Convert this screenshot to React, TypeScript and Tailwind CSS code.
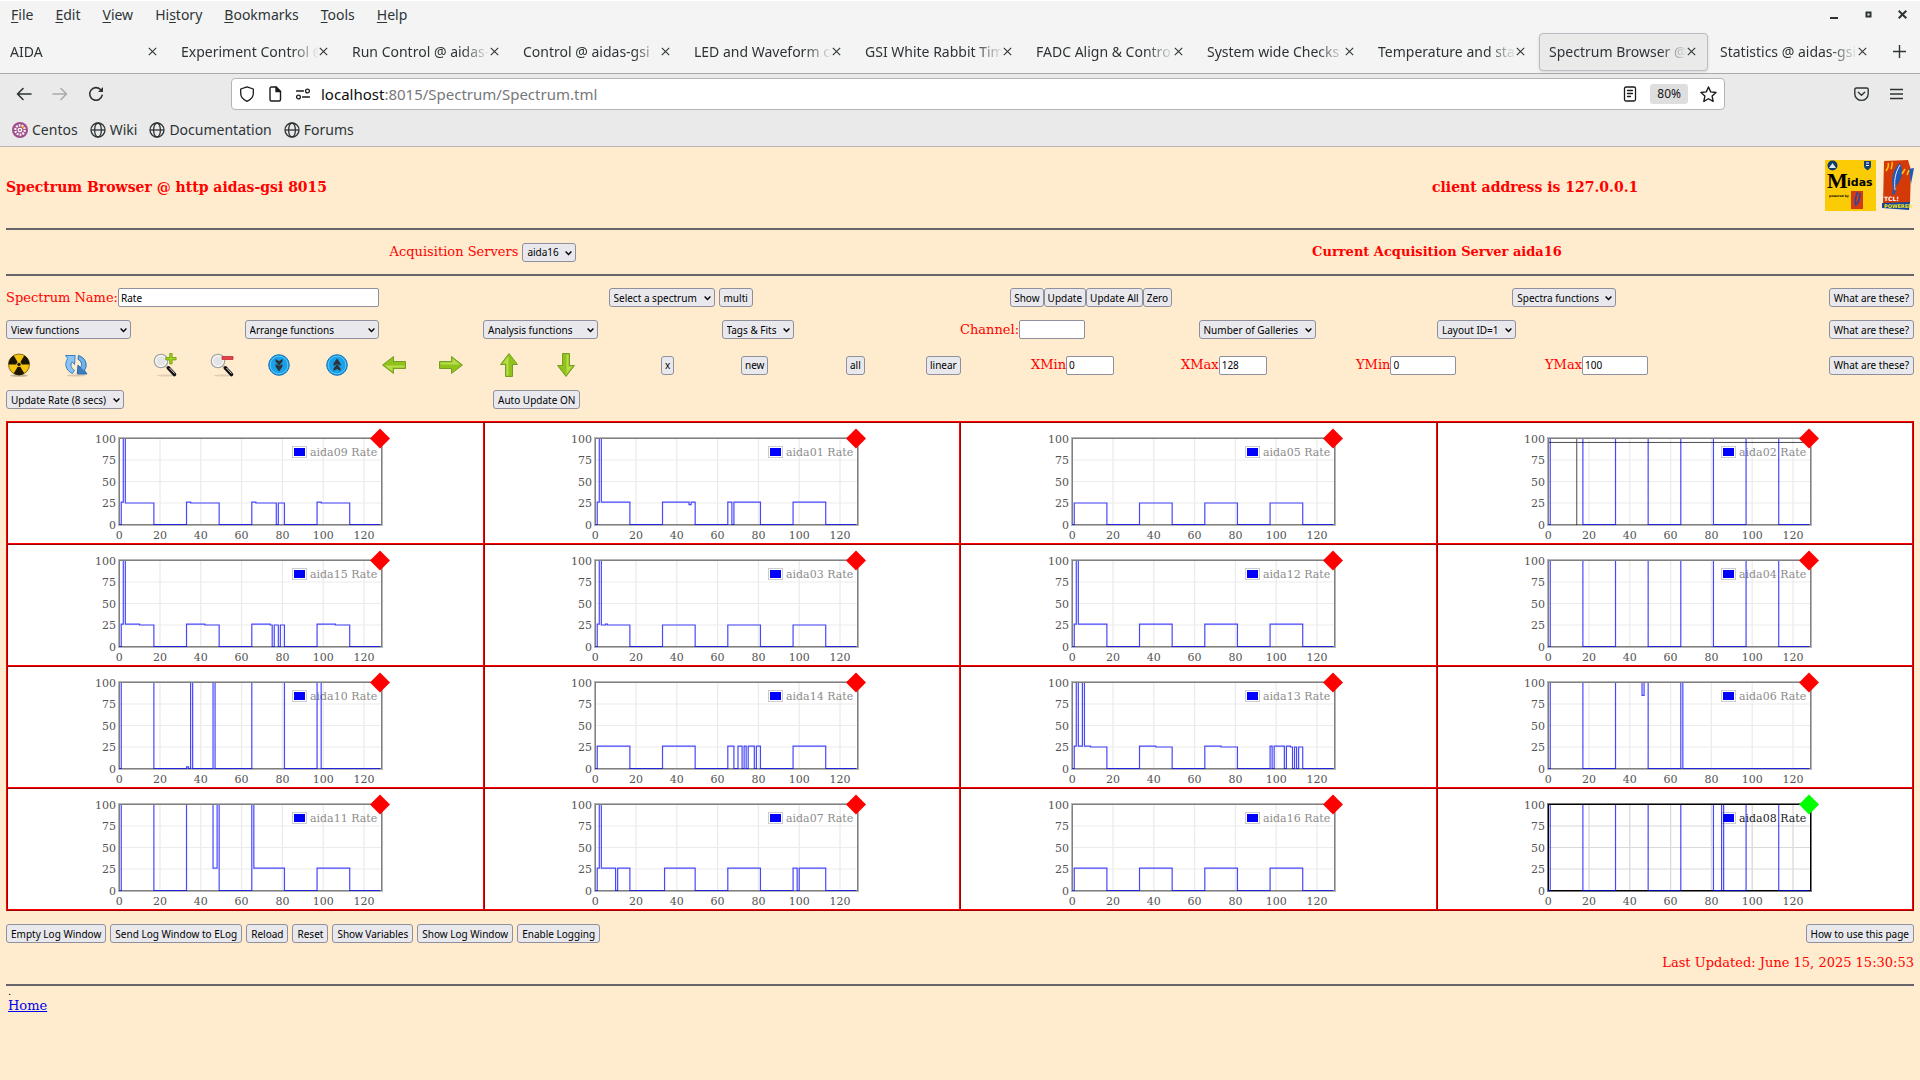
import { Fragment, useState } from 'react'
import type { ReactNode } from 'react'

type Step = [number, number]

interface Spectrum {
  name: string
  steps: Step[]
  active?: boolean
  cursor?: { x: number; y: number }
}

// anything above the axis maximum is clipped by the plot area
const OVER = 200

const MENUS = ['File', 'Edit', 'View', 'History', 'Bookmarks', 'Tools', 'Help']
const MENU_KEYS = [0, 0, 0, 2, 0, 0, 0]

const TABS = [
  'AIDA',
  'Experiment Control @',
  'Run Control @ aidas-',
  'Control @ aidas-gsi',
  'LED and Waveform ca',
  'GSI White Rabbit Tim',
  'FADC Align & Contro',
  'System wide Checks',
  'Temperature and stat',
  'Spectrum Browser @',
  'Statistics @ aidas-gsi',
]
const ACTIVE_TAB = 9

// four on/off cycles of 16 channels each
const cycles = (v: number): Step[] => [
  [0, 0], [1, v], [17, 0], [33, v], [49, 0], [65, v], [81, 0], [97, v], [113, 0],
]

const SPECTRA: Spectrum[] = [
  {
    name: 'aida09',
    steps: [[0, 0], [1, 26], [2, OVER], [3, 25], [17, 0], [33, 26], [35, 25], [49, 0], [65, 26], [67, 25], [77, 0], [78, 25], [81, 0], [97, 26], [99, 25], [113, 0]],
  },
  {
    name: 'aida01',
    steps: [[0, 0], [1, 26], [2, OVER], [3, 26], [17, 0], [33, 26], [46, 23], [47, 26], [49, 0], [65, 26], [67, 0], [68, 26], [81, 0], [97, 26], [113, 0]],
  },
  { name: 'aida05', steps: cycles(25) },
  { name: 'aida02', steps: cycles(OVER), cursor: { x: 14, y: 96 } },
  {
    name: 'aida15',
    steps: [[0, 0], [1, 26], [2, OVER], [3, 26], [10, 25], [17, 0], [33, 26], [42, 25], [49, 0], [65, 26], [74, 25], [75, 0], [76, 25], [78, 0], [79, 25], [81, 0], [97, 26], [106, 25], [113, 0]],
  },
  {
    name: 'aida03',
    steps: [[0, 0], [1, 26], [2, OVER], [3, 25], [5, 26], [6, 25], [17, 0], [33, 25], [49, 0], [65, 25], [81, 0], [97, 25], [113, 0]],
  },
  {
    name: 'aida12',
    steps: [[0, 0], [1, 26], [2, OVER], [3, 26], [17, 0], [33, 26], [49, 0], [65, 26], [81, 0], [97, 26], [113, 0]],
  },
  { name: 'aida04', steps: cycles(OVER) },
  {
    name: 'aida10',
    steps: [[0, 0], [1, OVER], [17, 0], [33, 2], [34, 0], [35, OVER], [36, 0], [46, OVER], [47, 0], [65, OVER], [81, 0], [97, OVER], [99, 0]],
  },
  {
    name: 'aida14',
    steps: [[0, 0], [1, 26], [17, 0], [33, 26], [49, 0], [65, 26], [68, 0], [70, 26], [72, 0], [73, 26], [74, 0], [75, 26], [78, 0], [79, 26], [81, 0], [97, 26], [113, 0]],
  },
  {
    name: 'aida13',
    steps: [[0, 0], [1, 26], [2, OVER], [3, 26], [5, OVER], [6, 26], [9, 25], [17, 0], [33, 26], [41, 25], [49, 0], [65, 26], [73, 25], [81, 0], [97, 26], [98, 0], [99, 26], [104, 0], [105, 26], [107, 25], [108, 0], [109, 25], [110, 0], [111, 25], [113, 0]],
  },
  {
    name: 'aida06',
    steps: [[0, 0], [1, OVER], [17, 0], [33, OVER], [46, 85], [47, OVER], [49, 0], [65, OVER], [66, 0]],
  },
  {
    name: 'aida11',
    steps: [[0, 0], [1, OVER], [17, 0], [33, OVER], [46, 26], [48, OVER], [49, 0], [65, OVER], [66, 26], [81, 0], [97, 26], [113, 0]],
  },
  {
    name: 'aida07',
    steps: [[0, 0], [1, 26], [2, OVER], [3, 26], [10, 0], [11, 26], [17, 0], [34, 26], [49, 0], [65, 26], [81, 0], [97, 26], [99, 0], [100, 26], [113, 0]],
  },
  { name: 'aida16', steps: cycles(26) },
  {
    name: 'aida08',
    active: true,
    steps: [[0, 0], [1, OVER], [17, 0], [33, OVER], [49, 0], [65, OVER], [81, 0], [85, OVER], [86, 0], [97, OVER], [113, 0]],
  },
]

/* ---------- browser chrome ---------- */

function CloseIcon() {
  return (
    <svg width="9" height="9" viewBox="0 0 9 9" fill="none" stroke="#2e3436" strokeWidth="1.1">
      <path d="M.8.8l7.400 7.400M8.200.8L.8 8.200" />
    </svg>
  )
}

function GlobeIcon() {
  return (
    <svg width="16" height="16" viewBox="0 0 16 16" fill="none" stroke="#2e3436" strokeWidth="1.3">
      <circle cx="8" cy="8" r="7" />
      <ellipse cx="8" cy="8" rx="3.400" ry="7" />
      <path d="M1 8h14" />
    </svg>
  )
}

function CentosIcon() {
  return (
    <svg width="16" height="16" viewBox="0 0 16 16">
      <circle cx="8" cy="8" r="8" fill="#a14f8c" />
      <circle cx="8" cy="8" r="4.700" fill="none" stroke="#fff" strokeWidth="2.200" strokeDasharray="1.800 1.100" />
      <circle cx="8" cy="8" r="1.700" fill="none" stroke="#fff" strokeWidth="1.300" />
      <path d="M9 4.500l3-.5.5 3-2-1z" fill="#efa724" />
    </svg>
  )
}

function BrowserChrome() {
  return (
    <header className="font-['Noto_Sans',sans-serif] text-[14px] text-[#2e3436]">
      <div className="flex h-[30px] items-center justify-between border-t border-white bg-[#f4f4f4] pr-[13px] pb-[2px] pl-[11px]">
        <nav className="flex gap-[22px]">
          {MENUS.map((m, i) => (
            <button key={m} type="button">
              {m.slice(0, MENU_KEYS[i])}
              <span className="underline underline-offset-2">{m[MENU_KEYS[i]]}</span>
              {m.slice(MENU_KEYS[i] + 1)}
            </button>
          ))}
        </nav>
        <div className="flex items-center gap-[25px]">
          <button type="button" aria-label="Minimize">
            <svg width="9" height="9" viewBox="0 0 9 9"><path d="M0 7h8v2H0z" fill="#2e3436" /></svg>
          </button>
          <button type="button" aria-label="Restore">
            <svg width="9" height="9" viewBox="0 0 9 9"><path d="M2.500 2.500h4v4h-4z" fill="none" stroke="#2e3436" strokeWidth="2" /></svg>
          </button>
          <button type="button" aria-label="Close">
            <svg width="9" height="9" viewBox="0 0 9 9"><path d="M.7.700l7.600 7.600M8.300.700L.7 8.300" stroke="#2e3436" strokeWidth="2" /></svg>
          </button>
        </div>
      </div>

      <div className="flex h-11 items-center border-b border-[#a9a9ab] bg-[#f4f4f4] pr-[14px]">
        {TABS.map((t, i) => (
          <div
            key={t}
            className={`mr-0.5 flex h-[38px] min-w-0 flex-1 items-center justify-between rounded-[4px] border pr-[11px] pl-[9px] leading-6 ${
              i === ACTIVE_TAB ? 'border-[#bcbcc4] bg-[#eaeaea] shadow-sm' : 'border-transparent'
            }`}
          >
            <span className="min-w-0 flex-1 overflow-hidden mask-r-from-80% whitespace-nowrap">{t}</span>
            <button type="button" aria-label={`Close ${t}`}><CloseIcon /></button>
          </div>
        ))}
        <button type="button" aria-label="New tab" className="ml-[12px]">
          <svg width="13" height="13" viewBox="0 0 13 13" stroke="#2e3436" strokeWidth="1.4"><path d="M6.500 0v13M0 6.500h13" /></svg>
        </button>
      </div>

      <div className="flex h-10 items-center bg-[#eaeaea] pr-[17px] pl-4">
        <div className="flex w-[215px] shrink-0 gap-5">
          <button type="button" aria-label="Back">
            <svg width="16" height="16" viewBox="0 0 16 16" fill="none" stroke="#2e3436" strokeWidth="1.600" strokeLinecap="round" strokeLinejoin="round"><path d="M15 8H1.500M7 2.500L1.500 8 7 13.500" /></svg>
          </button>
          <button type="button" aria-label="Forward" disabled>
            <svg width="16" height="16" viewBox="0 0 16 16" fill="none" stroke="#a9abac" strokeWidth="1.600" strokeLinecap="round" strokeLinejoin="round"><path d="M1 8h13.500M9 2.500L14.500 8 9 13.500" /></svg>
          </button>
          <button type="button" aria-label="Reload">
            <svg width="16" height="16" viewBox="0 0 16 16" fill="none" stroke="#2e3436" strokeWidth="1.600" strokeLinecap="round"><path d="M14.200 9.200a6.300 6.300 0 1 1-1.700-5.700l1.300 1.300" /><path d="M15 1v5h-5z" fill="#2e3436" stroke="none" /></svg>
          </button>
        </div>
        <div className="mr-[129px] flex h-8 min-w-0 flex-1 items-center rounded-[4px] border border-[#b4b4b6] bg-white px-[7px]">
          <svg width="16" height="16" viewBox="0 0 16 16" fill="none" stroke="#1b1b1f" strokeWidth="1.300" strokeLinejoin="round"><path d="M8 .8L14.300 3v4.500c0 3.500-3 6.300-6.300 7.800C4.700 13.800 1.700 11 1.700 7.500V3z" /></svg>
          <svg width="14" height="16" viewBox="0 0 14 16" className="ml-[13px]" fill="none" stroke="#1b1b1f" strokeWidth="1.400" strokeLinejoin="round"><path d="M2 2.500C2 1.700 2.600 1 3.500 1H8l4.500 4.500V13.500c0 .9-.6 1.500-1.500 1.500H3.500c-.9 0-1.500-.6-1.500-1.500z" /><path d="M8 1v4.500h4.500z" fill="#1b1b1f" /></svg>
          <svg width="16" height="16" viewBox="0 0 16 16" className="ml-[13px]" fill="none" stroke="#1b1b1f" strokeWidth="1.300" strokeLinecap="round"><path d="M1.500 5h7M7.500 11h7" /><circle cx="12.500" cy="5" r="1.900" /><circle cx="3.500" cy="11" r="1.900" /></svg>
          <div className="ml-[10px] flex-1 text-[15px] text-[#77777b]">
            <span className="text-[#0c0c0d]">localhost</span>:8015/Spectrum/Spectrum.tml
          </div>
          <button type="button" aria-label="Reader view">
            <svg width="14" height="16" viewBox="0 0 14 16" fill="none" stroke="#1b1b1f" strokeWidth="1.300" strokeLinecap="round"><rect x="1.500" y="1" width="11" height="14" rx="1.500" /><path d="M4.500 4.500h5M4.500 7.500h5M4.500 10.500h3" /></svg>
          </button>
          <button type="button" className="ml-[13px] h-5 rounded-[3px] bg-[#dedede] px-[7px] text-[12px] text-[#15141a]">80%</button>
          <button type="button" aria-label="Bookmark" className="ml-3">
            <svg width="17" height="17" viewBox="0 0 16 16" fill="none" stroke="#1b1b1f" strokeWidth="1.300" strokeLinejoin="round"><path d="M8 .9l2.100 4.600 5 .6-3.700 3.400 1 5L8 12l-4.400 2.500 1-5L.9 6.100l5-.6z" /></svg>
          </button>
        </div>
        <div className="flex items-center gap-[21px]">
          <button type="button" aria-label="Save to Pocket">
            <svg width="15" height="16" viewBox="0 0 15 16" fill="none" stroke="#2e3436" strokeWidth="1.400" strokeLinecap="round" strokeLinejoin="round"><path d="M2.200 2h10.600c.8 0 1.400.6 1.400 1.400V7.700a6.700 6.700 0 0 1-13.400 0V3.400C.8 2.600 1.400 2 2.200 2z" /><path d="M4.300 6.300l3.200 3 3.200-3" /></svg>
          </button>
          <button type="button" aria-label="Menu">
            <svg width="13" height="12" viewBox="0 0 13 12" stroke="#2e3436" strokeWidth="1.400"><path d="M0 1.500h13M0 6h13M0 10.500h13" /></svg>
          </button>
        </div>
      </div>

      <div className="flex h-[33px] items-center gap-3 border-b border-[#b4b4b6] bg-[#eaeaea] pl-3">
        <a href="#centos" className="flex items-center gap-1"><CentosIcon />Centos</a>
        {['Wiki', 'Documentation', 'Forums'].map(b => (
          <a key={b} href={`#${b.toLowerCase()}`} className="flex items-center gap-1"><GlobeIcon />{b}</a>
        ))}
      </div>
    </header>
  )
}

/* ---------- form controls ---------- */

function Btn({ children, tight = false }: { children: ReactNode; tight?: boolean }) {
  return (
    <button
      type="button"
      className={`h-[19px] shrink-0 rounded-[3px] border border-[#8f8f9d] bg-[#e9e9ed] font-['Noto_Sans',sans-serif] text-[10px] leading-4 whitespace-nowrap text-black ${tight ? 'px-[3px]' : 'px-1'}`}
    >
      {children}
    </button>
  )
}

function Picker({ label, className = '' }: { label: string; className?: string }) {
  return (
    <span className={`relative inline-flex ${className}`}>
      <select
        aria-label={label}
        className="h-[19px] w-full appearance-none rounded-[3px] border border-[#8f8f9d] bg-[#e9e9ed] pr-4 pl-1 font-['Noto_Sans',sans-serif] text-[10px] leading-4 text-black"
      >
        <option>{label}</option>
      </select>
      <svg width="7" height="5" viewBox="0 0 7 5" className="pointer-events-none absolute top-2 right-1" fill="none" stroke="#000" strokeWidth="1.400">
        <path d="M.6.600l2.900 3L6.400.600" />
      </svg>
    </span>
  )
}

function Field({ id, label, initial = '', className }: { id: string; label: string; initial?: string; className: string }) {
  const [value, setValue] = useState(initial)
  return (
    <div className="flex items-center">
      <label htmlFor={id}>{label}</label>
      <input
        id={id}
        value={value}
        onChange={e => setValue(e.target.value)}
        className={`h-[19px] rounded-[2px] border border-[#8f8f9d] bg-white px-[2px] font-['Noto_Sans',sans-serif] text-[10px] text-black ${className}`}
      />
    </div>
  )
}

/* ---------- toolbar icons ---------- */

function ArrowIcon({ turn }: { turn: number }) {
  return (
    <svg width="26" height="26" viewBox="0 0 26 26">
      <g transform={`rotate(${turn} 13 13)`}>
        <path d="M1.500 9.500h12V4.500L24.500 13l-11 8.500v-5h-12z" fill="#8fc31a" stroke="#5f8f12" strokeWidth=".8" />
        <path d="M2.500 10.500h12V6.800L22 12.500H2.500z" fill="#c3e25a" opacity=".8" />
      </g>
    </svg>
  )
}

function ChevronIcon({ up = false }: { up?: boolean }) {
  return (
    <svg width="26" height="26" viewBox="0 0 26 26">
      <circle cx="13" cy="13" r="10.300" fill="#18a0ea" stroke="#1673b8" />
      <circle cx="13" cy="13" r="8.800" fill="none" stroke="#5cc6f8" />
      <g transform={up ? 'rotate(180 13 13)' : undefined} fill="#2f3338">
        <path d="M9.500 7l3.500 2 3.500-2v2.500L13 14 9.500 9.500z" />
        <path d="M9.500 12l3.500 2 3.500-2v2.500L13 19.500 9.500 14.500z" />
      </g>
    </svg>
  )
}

function MagnifierIcon({ plus = false }: { plus?: boolean }) {
  return (
    <svg width="26" height="26" viewBox="0 0 26 26">
      <ellipse cx="14" cy="23.500" rx="9" ry="1" fill="#000" opacity=".12" />
      <path d="M14.500 14.500l2 2" stroke="#999" strokeWidth="2.500" />
      <path d="M16.500 16l6 6.500" stroke="#111" strokeWidth="3.600" strokeLinecap="round" />
      <path d="M17.500 16l5 5.500" stroke="#ddd" strokeWidth="1" />
      <circle cx="9" cy="9" r="6.600" fill="#e4e4e4" stroke="#a2a2a2" strokeWidth="1.400" />
      <circle cx="9" cy="9" r="5.400" fill="none" stroke="#fafafa" strokeWidth="1.200" />
      {plus ? (
        <path d="M17.700 1.500h2.400v4h4v2.400h-4v4h-2.400v-4h-4V5.500h4z" fill="#a5d21c" stroke="#6b9a10" strokeWidth=".8" />
      ) : (
        <path d="M13 4.500h11v3H13z" fill="#e8404a" stroke="#c2202b" strokeWidth=".7" />
      )}
    </svg>
  )
}

function NuclearIcon() {
  return (
    <svg width="26" height="26" viewBox="0 0 26 26">
      <ellipse cx="13" cy="23.600" rx="9" ry="1.200" fill="#000" opacity=".25" />
      <circle cx="13" cy="12.500" r="10.500" fill="#f5c312" stroke="#6b5200" strokeWidth=".8" />
      <g fill="#1a1600">
        <path d="M13 12.500L7.700 3.400A10.500 10.500 0 0 0 2.500 12.500z" />
        <path d="M13 12.500h10.500a10.500 10.500 0 0 0-5.200-9.100z" />
        <path d="M13 12.500L7.700 21.600a10.500 10.500 0 0 0 10.600 0z" />
      </g>
      <circle cx="13" cy="12.500" r="2.600" fill="#f5c312" />
      <circle cx="13" cy="12.500" r="1.700" fill="#1a1600" />
    </svg>
  )
}

function RefreshIcon() {
  return (
    <svg width="26" height="26" viewBox="0 0 26 26">
      <ellipse cx="13" cy="23.500" rx="9" ry="1" fill="#000" opacity=".15" />
      <path d="M9.500 21.500C2.500 18.500 1.200 11.500 4.700 6.500L2.500 3.500h9.700l-.7 9-2.300-2.700c-2.200 3-1.500 6 2.300 8.500z" fill="#8cc5f3" stroke="#3a80c4" strokeWidth="1" />
      <path d="M15.500 3.500c7.500 2.500 9.500 9.500 6 15l2.500 3.500h-9.700l.7-9 2.300 2.700c2.200-3 1.500-6-2.300-8.500z" fill="#6fb2ea" stroke="#2c6db2" strokeWidth="1" />
      <path d="M15 13l-.7 9H24l-2.500-3.500L19 16.500z" fill="#2566ac" opacity=".7" />
    </svg>
  )
}

const TOOLS: [string, ReactNode][] = [
  ['Kill', <NuclearIcon />],
  ['Refresh', <RefreshIcon />],
  ['Zoom in', <MagnifierIcon plus />],
  ['Zoom out', <MagnifierIcon />],
  ['Page down', <ChevronIcon />],
  ['Page up', <ChevronIcon up />],
  ['Left', <ArrowIcon turn={180} />],
  ['Right', <ArrowIcon turn={0} />],
  ['Up', <ArrowIcon turn={270} />],
  ['Down', <ArrowIcon turn={90} />],
]

/* ---------- logos ---------- */

function MidasLogo() {
  return (
    <svg width="51" height="51" viewBox="0 0 51 51">
      <rect width="51" height="51" fill="#fbcb05" />
      <circle cx="7.500" cy="5.500" r="5" fill="#0e3a6d" />
      <path d="M4 8l3.500-5L11 8z" fill="#dfe9f2" />
      <path d="M39 1h7v5c0 2-2 3.500-3.500 4.200C41 9.500 39 8 39 6z" fill="#12407c" />
      <path d="M41 3h3M41 5.500h3" stroke="#fff" />
      <text x="2" y="28" fontFamily="'Liberation Serif', serif" fontWeight="700" fontSize="22">M</text>
      <text x="22" y="26" fontFamily="'DejaVu Sans', sans-serif" fontWeight="700" fontSize="11">idas</text>
      <text x="4" y="37" fontFamily="'DejaVu Sans', sans-serif" fontWeight="700" fontSize="3">powered by</text>
      <path d="M26 31h12v18H26z" fill="#d23a12" />
      <path d="M33 32c-3 4-3 9-2 14M35 33c0 4-1 8-3 11" stroke="#2347a8" strokeWidth="1.600" fill="none" />
    </svg>
  )
}

function TclLogo() {
  return (
    <svg width="33" height="51" viewBox="0 0 33 51">
      <path d="M3 1l24-1 3 10-1 33-27 1z" fill="#d43a08" />
      <path d="M28 9l5-1-3 16z" fill="#1f58b8" />
      <path d="M1 43l28-1-1 8-27-2z" fill="#14469e" />
      <path d="M19 3c-7 6-9 15-7 25l-1 7 3-1 1-8c6-7 7-13 5-21z" fill="#1f58b8" />
      <path d="M19 5c-5 8-6 16-5 25" stroke="#dfe8f6" fill="none" />
      <path d="M7 3c1 2 0 5-2 8M11 2c1 2 0 4-1 7M24 9l-3 5M28 10l-2 5" stroke="#fbcb05" strokeWidth="1.500" fill="none" />
      <text x="3" y="41" fontFamily="'DejaVu Sans', sans-serif" fontSize="6" fill="#fff">TCL!</text>
      <text x="3" y="48" fontFamily="'DejaVu Sans', sans-serif" fontWeight="700" fontSize="5" fill="#f4e409">POWERED</text>
    </svg>
  )
}

/* ---------- gallery ---------- */

const X0 = 25.2
const SX = 2.04
const Y0 = 101.5
const SY = 0.86
const px = (v: number) => X0 + v * SX
const py = (v: number) => Y0 - v * SY

function tracePath(steps: Step[]) {
  let d = `M${px(0)} ${py(0)}`
  for (const [x, v] of steps) d += `H${px(x)}V${py(v)}`
  return `${d}H${px(128)}`
}

function Plot({ name, steps, active = false, cursor }: Spectrum) {
  const grid = active ? '#d9d9d9' : '#ebebeb'
  return (
    <svg width="303" height="120" viewBox="0 0 303 120" className="mx-auto block" fontFamily="'DejaVu Serif', serif" fontSize="11">
      {[0, 20, 40, 60, 80, 100, 120].map(v => (
        <Fragment key={v}>
          {v > 0 && <path d={`M${px(v)} 16V101`} stroke={grid} strokeWidth="1.300" />}
          <text x={px(v)} y="116" textAnchor="middle" fill="#545454">{v}</text>
        </Fragment>
      ))}
      {[0, 25, 50, 75, 100].map(v => (
        <Fragment key={v}>
          {v > 0 && <path d={`M26 ${py(v)}H288`} stroke={grid} strokeWidth="1.200" />}
          <text x="22" y={Math.round(py(v)) + 4} textAnchor="end" fill="#545454">{v}</text>
        </Fragment>
      ))}
      <rect x="24.500" y="14.500" width="264" height="88" fill="none" stroke={active ? '#777' : '#b5b5b5'} />
      <rect x="25.500" y="15.500" width="262" height="86" fill="none" stroke={active ? '#000' : '#808080'} />
      <rect x="198.500" y="23.500" width="14" height="11" fill="#fff" stroke="#ccc" />
      <rect x="200" y="25" width="11" height="8" fill="#00f" />
      <text x="216" y="33" fill={active ? '#222' : '#8c8c8c'}>{name} Rate</text>
      <svg x="25" y="16" width="263" height="87" viewBox="25 16 263 87">
        <path d={tracePath(steps)} fill="none" stroke="#00f" strokeWidth="1.200" opacity=".72" />
        {cursor && (
          <path d={`M${px(cursor.x)} 16V102M26 ${py(cursor.y) + 0.5}H288`} stroke="#000" strokeWidth="1" opacity=".7" />
        )}
      </svg>
      <path d="M286 5.500l10 10-10 10-10-10z" fill={active ? '#0f0' : '#f00'} />
    </svg>
  )
}

export default function App() {
  return (
    <div className="min-h-screen bg-[#ffebcd] font-['DejaVu_Serif',serif] text-[13px] leading-4 text-[#f00]">
      <BrowserChrome />

      <main className="px-[6px]">
        <div className="grid grid-cols-[1426fr_482fr] items-center pt-[13px] pb-[17px] font-bold">
          <h1 className="pt-[2px] text-[14px]">Spectrum Browser @ http aidas-gsi 8015</h1>
          <div className="flex items-center justify-between">
            <span className="pt-[2px] text-[14px]">client address is 127.0.0.1</span>
            <div className="flex gap-[5px]">
              <MidasLogo />
              <TclLogo />
            </div>
          </div>
        </div>
        <hr className="border-t-2 border-[#66666a]" />

        <div className="grid h-11 grid-cols-2 items-center justify-items-center">
          <div className="flex items-center gap-1">
            <span>Acquisition Servers</span>
            <Picker label="aida16" />
          </div>
          <strong>Current Acquisition Server aida16</strong>
        </div>
        <hr className="border-t-2 border-[#66666a]" />

        <div className="mt-3 grid grid-cols-[6fr_4fr_5fr_4fr] items-center">
          <Field id="spectrum" label="Spectrum Name:" initial="Rate" className="w-[261px]" />
          <div className="flex gap-1">
            <Picker label="Select a spectrum" />
            <Btn>multi</Btn>
          </div>
          <div className="flex">
            <Btn tight>Show</Btn>
            <Btn tight>Update</Btn>
            <Btn tight>Update All</Btn>
            <Btn tight>Zero</Btn>
          </div>
          <div className="flex justify-between">
            <Picker label="Spectra functions" />
            <Btn>What are these?</Btn>
          </div>
        </div>

        <div className="mt-[13px] grid grid-cols-8 items-center">
          <Picker label="View functions" className="w-[125px]" />
          <Picker label="Arrange functions" className="w-[134px]" />
          <Picker label="Analysis functions" className="w-[115px]" />
          <div className="flex"><Picker label="Tags & Fits" /></div>
          <Field id="channel" label="Channel:" className="w-[66px]" />
          <div className="flex"><Picker label="Number of Galleries" /></div>
          <div className="flex"><Picker label="Layout ID=1" /></div>
          <div className="flex justify-end"><Btn>What are these?</Btn></div>
        </div>

        <div className="mt-[13px] grid grid-cols-[57fr_89fr_57fr_57fr_58fr_57fr_57fr_58fr_57fr_108fr_80fr_105fr_80fr_105fr_150fr_175fr_189fr_369fr] items-center">
          {TOOLS.map(([label, icon]) => (
            <button key={label} type="button" aria-label={label} className="w-[26px]">{icon}</button>
          ))}
          {['x', 'new', 'all', 'linear'].map(b => (
            <div key={b} className="flex"><Btn tight>{b}</Btn></div>
          ))}
          <Field id="xmin" label="XMin" initial="0" className="w-12" />
          <Field id="xmax" label="XMax" initial="128" className="w-12" />
          <Field id="ymin" label="YMin" initial="0" className="w-[66px]" />
          <div className="flex items-center justify-between">
            <Field id="ymax" label="YMax" initial="100" className="w-[66px]" />
            <Btn>What are these?</Btn>
          </div>
        </div>

        <div className="mt-3 grid grid-cols-[487fr_1421fr]">
          <div className="flex"><Picker label="Update Rate (8 secs)" /></div>
          <div className="flex"><Btn>Auto Update ON</Btn></div>
        </div>

        <section className="mt-3 grid grid-cols-4 border border-t-[#f00] border-r-[#a00000] border-b-[#a00000] border-l-[#f00] bg-white">
          {SPECTRA.map(s => (
            <div key={s.name} className="border border-t-[#a00000] border-r-[#f00] border-b-[#f00] border-l-[#a00000]">
              <Plot {...s} />
            </div>
          ))}
        </section>

        <div className="mt-[13px] flex gap-1">
          {['Empty Log Window', 'Send Log Window to ELog', 'Reload', 'Reset', 'Show Variables', 'Show Log Window', 'Enable Logging'].map(b => (
            <Btn key={b}>{b}</Btn>
          ))}
          <div className="ml-auto flex"><Btn>How to use this page</Btn></div>
        </div>

        <p className="mt-3 mb-[13px] text-right">Last Updated: June 15, 2025 15:30:53</p>
        <hr className="border-t-2 border-[#66666a]" />
        <footer className="pl-[2px]">
          <div className="text-[10px] leading-3 text-black">.</div>
          <a href="#home" className="block w-fit text-[#00e] underline">Home</a>
        </footer>
      </main>
    </div>
  )
}
